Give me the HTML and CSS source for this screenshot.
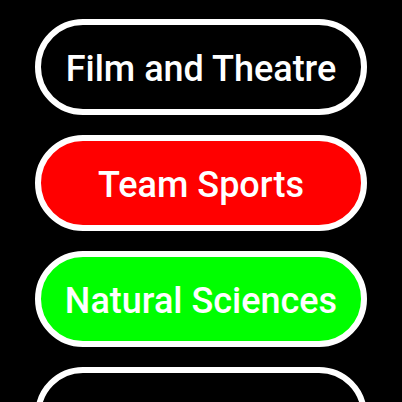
FILE: index.html
```html
<!DOCTYPE html>
<html>
<head>
<meta charset="utf-8">
<link rel="stylesheet" href="styles.css">
</head>
<body>
<div class="list">
  <button class="pill pill-dark">Film and Theatre</button>
  <button class="pill pill-red">Team Sports</button>
  <button class="pill pill-green">Natural Sciences</button>
  <button class="pill pill-dark"></button>
</div>
</body>
</html>
```
FILE: styles.css
```css
html, body {
  margin: 0;
  padding: 0;
  background: #000;
  height: 100%;
  overflow: hidden;
}
.list {
  display: flex;
  flex-direction: column;
  align-items: center;
  gap: 20px;
  padding-top: 19px;
}
.pill {
  box-sizing: border-box;
  width: 332px;
  height: 96px;
  flex: none;
  border: 6px solid #fff;
  border-radius: 48px;
  color: #fff;
  font-family: Roboto, "Liberation Sans", sans-serif;
  font-weight: 500;
  font-size: 36px;
  line-height: 1;
  display: flex;
  align-items: center;
  justify-content: center;
  padding: 4px 0 0;
  margin: 0;
}
.pill-dark { background: #000; }
.pill-red { background: #ff0000; }
.pill-green { background: #00ff00; }
```
